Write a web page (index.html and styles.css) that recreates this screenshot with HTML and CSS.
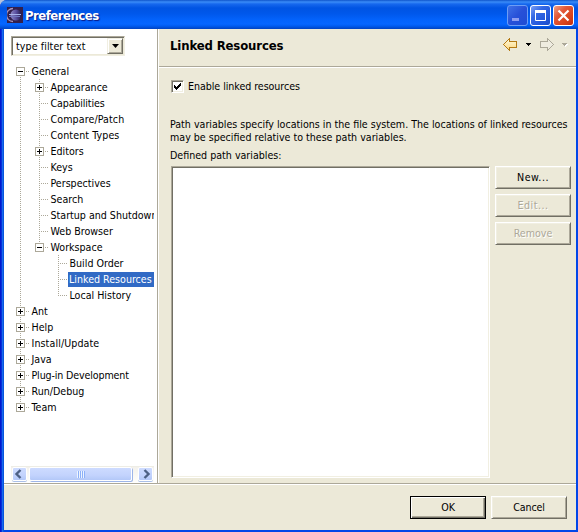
FILE: index.html
```
<!DOCTYPE html>
<html lang="en">
<head>
<meta charset="utf-8">
<title>Preferences</title>
<link rel="stylesheet" href="styles.css">
</head>
<body>
<div class="window">
  <header class="titlebar">
    <svg class="logo" width="16" height="16" viewBox="0 0 16 16"><defs><linearGradient id="lg"><stop offset="0" stop-color="#8f88c4"/><stop offset=".5" stop-color="#5a50a0"/><stop offset="1" stop-color="#221848"/></linearGradient></defs><rect width="16" height="16" fill="#33204c"/><path d="M6 1.500A6.500 6.500 0 0 0 6 14.500" fill="none" stroke="#a894bc" stroke-width="1.300"/><circle cx="9" cy="8" r="5.500" fill="url(#lg)"/><path d="M2 7.500h12" stroke="#a8b4ec"/><path d="M2 9.500h11" stroke="#7078c0"/></svg>
    <h1>Preferences</h1>
    <div class="controls">
      <span class="ctl min"><svg width="21" height="21"><rect x="5" y="13" width="7" height="3" fill="#8d9df0"/></svg></span>
      <span class="ctl max"><svg width="21" height="21"><path d="M5.500 6.500h10v9h-10z" fill="none" stroke="#fff"/><path d="M5 5h11v3H5z" fill="#fff"/></svg></span>
      <span class="ctl close"><svg width="21" height="21"><path d="M5.500 5.500l10 10M15.500 5.500l-10 10" stroke="#fff" stroke-width="2.200"/></svg></span>
    </div>
  </header>
  <div class="body">
    <aside class="side">
      <div class="combo"><span>type filter text</span><b><svg width="7" height="4"><path d="M0 0h7L3.500 4z"/></svg></b></div>
      <ul class="tree">
        <li class="branch"><div class="row"><i class="box minus"></i><span>General</span></div>
          <ul>
            <li><div class="row"><i class="box plus"></i><span>Appearance</span></div></li>
            <li><div class="row"><span class="tight">Capabilities</span></div></li>
            <li><div class="row"><span class="wide">Compare/Patch</span></div></li>
            <li><div class="row"><span class="wide">Content Types</span></div></li>
            <li><div class="row"><i class="box plus"></i><span>Editors</span></div></li>
            <li><div class="row"><span>Keys</span></div></li>
            <li><div class="row"><span>Perspectives</span></div></li>
            <li><div class="row"><span>Search</span></div></li>
            <li><div class="row"><span>Startup and Shutdown</span></div></li>
            <li><div class="row"><span>Web Browser</span></div></li>
            <li><div class="row"><i class="box minus"></i><span>Workspace</span></div>
              <ul>
                <li><div class="row"><span>Build Order</span></div></li>
                <li><div class="row"><span class="sel">Linked Resources</span></div></li>
                <li><div class="row"><span>Local History</span></div></li>
              </ul>
            </li>
          </ul>
        </li>
        <li><div class="row"><i class="box plus"></i><span>Ant</span></div></li>
        <li><div class="row"><i class="box plus"></i><span>Help</span></div></li>
        <li><div class="row"><i class="box plus"></i><span class="wide">Install/Update</span></div></li>
        <li><div class="row"><i class="box plus"></i><span>Java</span></div></li>
        <li><div class="row"><i class="box plus"></i><span class="tight">Plug-in Development</span></div></li>
        <li><div class="row"><i class="box plus"></i><span>Run/Debug</span></div></li>
        <li><div class="row"><i class="box plus"></i><span>Team</span></div></li>
      </ul>
      <div class="scroll">
        <span class="sb"><svg width="14" height="14"><path d="M8.500 3L4.500 7l4 4" fill="none" stroke="#4d6185" stroke-width="2.400"/></svg></span>
        <span class="thumb"><i></i></span>
        <span class="sb"><svg width="14" height="14"><path d="M6.500 3l4 4-4 4" fill="none" stroke="#4d6185" stroke-width="2.400"/></svg></span>
      </div>
    </aside>
    <main class="page">
      <div class="head">
        <h2>Linked Resources</h2>
        <svg class="nav" width="67" height="16" shape-rendering="crispEdges"><defs><linearGradient id="g" x2="0" y2="1"><stop offset="0" stop-color="#fffbe0"/><stop offset="1" stop-color="#fbd67c"/></linearGradient></defs>
          <path d="M1.500 7.500l6-6v3h7v6h-7v3z" fill="url(#g)" stroke="#b47a14"/><path d="M24 6h5v1h-1v1h-1v1h-1V8h-1V7h-1z" fill="#000"/>
          <path d="M51.500 7.500l-6-6v3h-7v6h7v3z" fill="#efece0" stroke="#aca899"/><path d="M61 7h5v1h-1v1h-1v1h-1V9h-1V8h-1z" fill="#fff"/><path d="M60 6h5v1h-1v1h-1v1h-1V8h-1V7h-1z" fill="#aca899"/></svg>
      </div>
      <div class="content">
        <label class="check"><i><svg width="9" height="9" shape-rendering="crispEdges"><path d="M1 3h1v1h1v1h1V4h1V3h1V2h1V1h1v3H7v1H6v1H5v1H4v1H3V7H2V6H1z"/></svg></i><span>Enable linked resources</span></label>
        <p class="desc">Path variables specify locations in the file system. The locations of linked resources<br>may be specified relative to these path variables.</p>
        <p class="cap">Defined path variables:</p>
        <div class="vars">
          <div class="list"></div>
          <div class="buttons">
            <button class="new">New...</button>
            <button class="edit" disabled>Edit...</button>
            <button disabled>Remove</button>
          </div>
        </div>
      </div>
    </main>
  </div>
  <footer class="foot">
    <button class="default">OK</button>
    <button class="cancel">Cancel</button>
  </footer>
</div>
</body>
</html>
```
FILE: styles.css
```
* { box-sizing: border-box; }
body, h1, h2, p, ul { margin: 0; padding: 0; }
body, button { font: 10.6px/13px "DejaVu Sans Condensed", "DejaVu Sans", sans-serif; color: #000; }
body { background: #b8c4dc; overflow: hidden; }
ul { list-style: none; }
.window { width: 578px; height: 532px; padding: 0 2px 2px 4px; display: flex; flex-direction: column; background: linear-gradient(90deg, #0019cf 0 1px, #0831d9 1px 2px, #166aee 2px 3px, #0855dd 3px 4px, #0146e8 4px); border-radius: 7px 0 0 0; overflow: hidden; }
.titlebar { height: 29px; flex: none; margin-left: -4px; margin-right: -2px; padding: 2px 4px 0 7px; display: flex; align-items: center; background: linear-gradient(#0f55cb 0, #3a8cf8 2px, #1668ee 4px, #0054e3 8px, #0058ec 14px, #0363fc 20px, #0666ff 24px, #005cf0 26px, #0142c0 29px); }
.logo { margin: 0 2px 1px 0; }
h1 { font: bold 13px/16px "DejaVu Sans Condensed", sans-serif; letter-spacing: -0.5px; color: #fff; text-shadow: 1px 1px 1px #0a1883; }
.controls { margin-left: auto; display: flex; gap: 2px; }
.ctl { width: 21px; height: 21px; border: 1px solid #fff; border-radius: 3px; background: linear-gradient(135deg, #7ba0f5 0, #3468e4 35%, #2358db 70%, #1a4cc8); }
.ctl svg { display: block; margin: -1px; }
.min { border-color: #6d9df5; background: linear-gradient(135deg, #3f72e8, #2750d8 50%, #1e4cd4); }
.close { background: linear-gradient(135deg, #f0a085 0, #e2593a 35%, #d9441c 70%, #c03010); }
.body { height: 454px; display: flex; flex: none; background: #ece9d8; }
.side { width: 154px; padding: 7px 0 1px 7px; background: #fff; border-right: 1px solid #aca899; box-shadow: 1px 0 #fff; display: flex; flex-direction: column; }
.combo { width: 114px; height: 20px; border: 1px solid; border-color: #aca899 #f1efe2 #f1efe2 #aca899; box-shadow: inset 1px 1px #716f64, inset -1px -1px #ece9d8; display: flex; align-items: center; justify-content: space-between; padding: 1px 1px 1px 4px; letter-spacing: 0.08px; }
.combo b { width: 16px; height: 16px; background: #ece9d8; border: 1px solid; border-color: #f1efe2 #716f64 #716f64 #f1efe2; box-shadow: inset 1px 1px #fff, inset -1px -1px #aca899; display: flex; align-items: center; justify-content: center; }
.tree { margin-top: 7px; width: 143px; overflow: hidden; white-space: nowrap; padding-left: 5px; }
.tree li { position: relative; padding-left: 4px; }
.tree ul { padding-left: 15px; }
/* dotted connectors */
.tree li::before { content: ""; position: absolute; left: 4px; top: 0; bottom: 0; width: 1px; background: repeating-linear-gradient(#aca899 0 1px, transparent 1px 2px); }
.tree > li:first-child::before { top: 8px; }
.tree li:last-child::before { bottom: auto; height: 9px; }
.tree ul > li:last-child::before { height: 9px; }
.row { height: 16px; padding-left: 11.5px; position: relative; display: flex; align-items: center; }
.row::before { content: ""; position: absolute; left: 0; top: 8px; width: 9px; height: 1px; background: repeating-linear-gradient(90deg, #aca899 0 1px, transparent 1px 2px); }
.row span { line-height: 15px; height: 15px; }
.row .tight { letter-spacing: -0.13px; }
.row .wide { letter-spacing: 0.1px; }
.row span.sel { background: #316ac5; color: #fff; margin-left: -1.5px; padding: 0 10px 0 1px; }
.box { position: absolute; left: -4px; top: 4px; width: 9px; height: 9px; border: 1px solid #aca899; background: linear-gradient(#000, #000) center / 5px 1px no-repeat #fff; }
.plus { background: linear-gradient(#000, #000) center / 5px 1px no-repeat, linear-gradient(#000, #000) center / 1px 5px no-repeat #fff; }
.scroll { width: 143px; height: 16px; margin-top: auto; border-top: 1px solid #eeede5; background: linear-gradient(#f3f1ec, #fefefb); display: flex; padding: 0 1px; }
.sb, .thumb { height: 14px; border: 1px solid #fff; border-radius: 2px; background: linear-gradient(#cddbff, #c3d3fd 60%, #b3c8f8); box-shadow: 0 1px #a9bfe8; }
.sb { width: 15px; flex: none; }
.sb svg { display: block; margin: -1px 0 0 -1px; }
.thumb { width: 103px; flex: none; margin: 0 6px 0 2px; display: flex; align-items: center; justify-content: center; box-shadow: 1px 1px #9db5e8; }
.thumb i { width: 8px; height: 7px; background: repeating-linear-gradient(90deg, #eef4fe 0 1px, #8cb0f8 1px 2px); }
.page { flex: 1; margin-left: 1px; min-width: 0; }
.head { height: 39px; padding: 7px 7px 0 11px; display: flex; justify-content: space-between; border-bottom: 1px solid #fff; box-shadow: inset 0 -1px #aca899; }
h2 { font: bold 13px/19px "DejaVu Sans Condensed", sans-serif; letter-spacing: -0.13px; }
.nav { margin-top: 1px; }
.content { padding: 11px 5px 0 12px; }
.check { display: flex; align-items: center; height: 14px; gap: 4px; letter-spacing: -0.05px; }
.check i { width: 13px; height: 13px; background: #fff; border: 1px solid; border-color: #aca899 #fff #fff #aca899; box-shadow: inset 1px 1px #716f64, inset -1px -1px #f1efe2; padding: 1px; }
.check svg { display: block; }
.desc { margin: 25px 0 0 -1px; white-space: nowrap; }
.cap { margin: 5px 0 0 -1px; }
.vars { display: flex; gap: 5px; margin-top: 4px; }
.list { width: 319px; height: 312px; background: #fff; border: 1px solid; border-color: #aca899 #fff #fff #aca899; box-shadow: inset 1px 1px #716f64, inset -1px -1px #f1efe2; }
.buttons { display: flex; flex-direction: column; gap: 5px; }
button { width: 76px; height: 23px; padding: 0 0 1px; border: 1px solid; border-color: #fff #716f64 #716f64 #fff; background: #ece9d8; box-shadow: inset 1px 1px #f1efe2, inset -1px -1px #aca899; }
button:disabled { color: #aca899; text-shadow: 1px 1px #fff; }
.new, .edit { letter-spacing: 0.5px; }
.cancel { letter-spacing: -0.15px; }
.foot { flex: 1; background: #ece9d8; border-top: 1px solid #aca899; box-shadow: inset 0 1px #fff; padding: 12px 9px 0; display: flex; justify-content: flex-end; gap: 5px; }
.default { border-color: #000; box-shadow: inset 1px 1px #fff, inset -1px -1px #716f64, inset -2px -2px #aca899; }
```
